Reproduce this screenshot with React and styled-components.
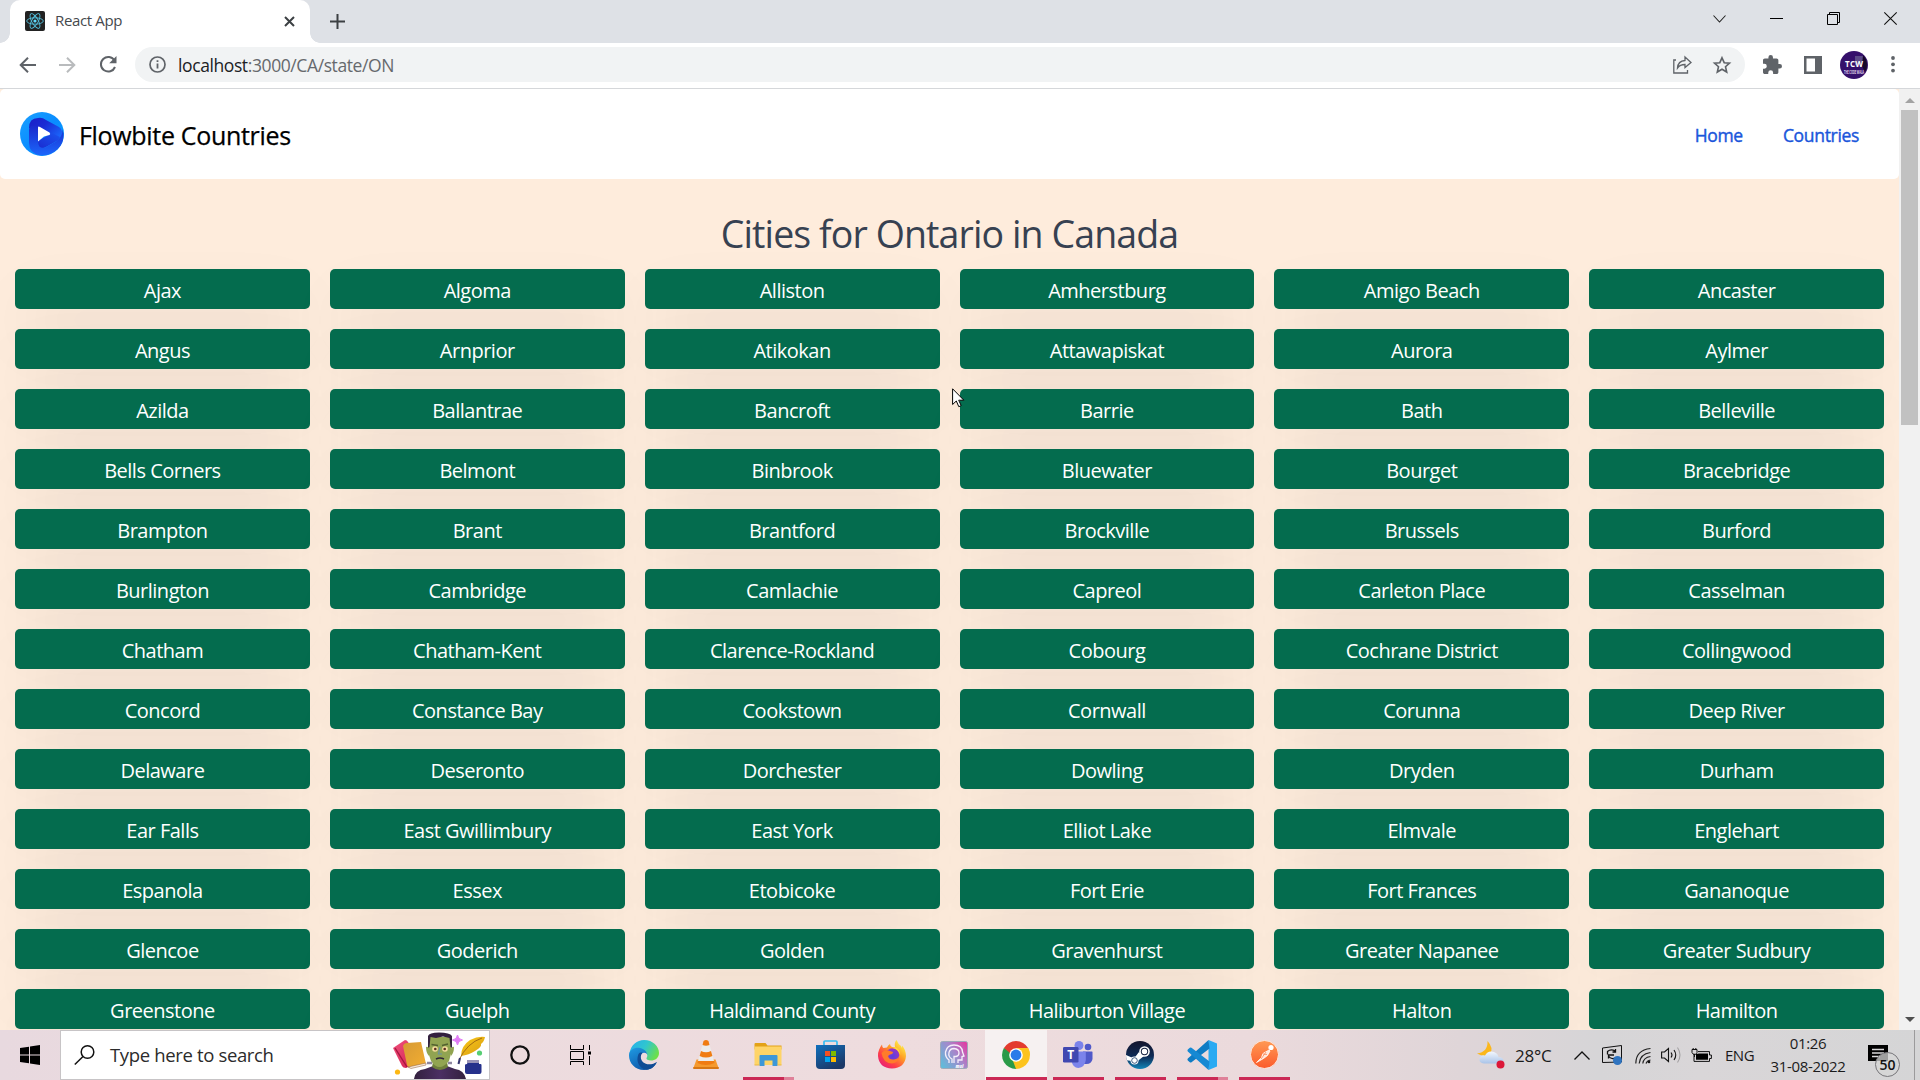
import React from "react";
import styled, { createGlobalStyle } from "styled-components";

const GlobalStyle = createGlobalStyle`
  *, *::before, *::after { box-sizing: border-box; }
  html, body { margin: 0; padding: 0; overflow: hidden; }
  body { font-family: "Open Sans", "Noto Sans", sans-serif; }
  svg { display: block; flex: none; overflow: visible; }
`;

const Screen = styled.div`
  width: 1920px;
  height: 1080px;
  display: flex;
  flex-direction: column;
  overflow: hidden;
  background: #fff;
`;

/* ---------- browser chrome ---------- */

const TabStrip = styled.div`
  height: 43px;
  flex: none;
  background: #dee1e6;
  display: flex;
  padding-left: 10px;
`;

const Tab = styled.div`
  position: relative;
  width: 300px;
  height: 43px;
  background: #fff;
  border-radius: 10px 10px 0 0;
  display: flex;
  align-items: center;
  padding: 0 15px 1px 15px;
  &::before, &::after {
    content: "";
    position: absolute;
    bottom: 0;
    width: 10px;
    height: 10px;
  }
  &::before {
    left: -10px;
    background: radial-gradient(circle at 0 0, transparent 9.5px, #fff 10px);
  }
  &::after {
    right: -10px;
    background: radial-gradient(circle at 100% 0, transparent 9.5px, #fff 10px);
  }
`;

const TabTitle = styled.span`
  flex: 1;
  margin-left: 10px;
  padding-bottom: 2px;
  font-size: 15px;
  letter-spacing: -0.35px;
  line-height: 20px;
  color: #45494d;
`;

const NewTab = styled.div`
  display: flex;
  align-items: center;
  margin-left: 20px;
`;

const WindowControls = styled.div`
  margin-left: auto;
  display: flex;
  align-items: center;
  height: 37px;
  gap: 44px;
  padding-right: 22px;
`;

const Toolbar = styled.div`
  height: 46px;
  flex: none;
  display: flex;
  align-items: center;
  padding: 0 20px 2px 19px;
  border-bottom: 1px solid #d5d7da;
`;

const NavButtons = styled.div`
  display: flex;
  align-items: center;
  gap: 23px;
  width: 116px;
  flex: none;
`;

const AddressBar = styled.div`
  width: 1610px;
  height: 35px;
  flex: none;
  border-radius: 18px;
  background: #f1f3f4;
  display: flex;
  align-items: center;
  padding: 0 14px;
`;

const Url = styled.span`
  flex: 1;
  margin-left: 12px;
  font-size: 17.5px;
  letter-spacing: -0.4px;
  line-height: 24px;
  color: #66696d;
  b { font-weight: 400; color: #202124; }
`;

const AddressActions = styled.div`
  display: flex;
  align-items: center;
  gap: 21px;
`;

const Extensions = styled.div`
  flex: 1;
  display: flex;
  align-items: center;
  padding-left: 18px;
`;

const SidePanelButton = styled.div`
  margin: 0 18px 0 22px;
`;

const MenuButton = styled.div`
  margin-left: 23px;
`;

/* ---------- page ---------- */

const Viewport = styled.div`
  height: 941px;
  flex: none;
  display: flex;
  overflow: hidden;
`;

const Page = styled.main`
  width: 1899px;
  flex: none;
  overflow: hidden;
  background: #feecdc;
`;

const SiteHeader = styled.header`
  height: 90px;
  background: #fff;
  border-radius: 5px;
  display: flex;
  align-items: center;
  padding: 0 40px 0 20px;
`;

const Brand = styled.span`
  margin-left: 15px;
  padding-top: 2px;
  font-size: 25px;
  line-height: 34px;
  letter-spacing: -0.32px;
  -webkit-text-stroke: 0.25px #000;
  color: #000;
`;

const SiteNav = styled.nav`
  margin-left: auto;
  padding-top: 2px;
  display: flex;
  gap: 40px;
`;

const NavLink = styled.a`
  font-size: 17.5px;
  line-height: 25px;
  letter-spacing: -0.32px;
  -webkit-text-stroke: 0.4px #1a56db;
  color: #1a56db;
`;

const Title = styled.h1`
  margin: 30px 0 0;
  height: 50px;
  font-size: 37.5px;
  font-weight: 400;
  line-height: 50px;
  letter-spacing: -0.9px;
  text-align: center;
  color: #374151;
`;

const CityGrid = styled.div`
  display: grid;
  grid-template-columns: repeat(6, 1fr);
  grid-auto-rows: 40px;
  gap: 20px;
  padding: 10px 15px 0;
`;

const CityButton = styled.div`
  border-radius: 5px;
  background: #046c4e;
  box-shadow: 0 31px 62px -15px rgba(0, 0, 0, 0.25);
  color: #fff;
  font-size: 20px;
  line-height: 43px;
  letter-spacing: -0.5px;
  text-align: center;
`;

const ScrollTrack = styled.div`
  width: 21px;
  background: #f1f1f1;
  display: flex;
  flex-direction: column;
  align-items: center;
  justify-content: space-between;
`;

const ScrollTop = styled.div`
  display: flex;
  flex-direction: column;
  align-items: center;
`;

const ScrollThumb = styled.div`
  width: 17px;
  height: 315px;
  background: #c1c1c1;
`;

const ScrollArrow = styled.div`
  height: ${(p) => (p.$down ? 17 : 21)}px;
  padding-top: ${(p) => (p.$down ? 4 : 9)}px;
  &::after {
    content: "";
    display: block;
    border: 5px solid transparent;
    ${(p) =>
      p.$down
        ? "border-bottom-width: 0; border-top-color: #505050;"
        : "border-top-width: 0; border-bottom-color: #a3a3a3;"}
  }
`;

const Pointer = styled.svg`
  position: absolute;
  left: 952px;
  top: 388px;
`;

/* ---------- taskbar ---------- */

const Taskbar = styled.footer`
  height: 50px;
  flex: none;
  display: flex;
  background: linear-gradient(90deg, #e8d9df 0, #ecdbde 400px, #eedcde 900px, #ebdadc 1250px, #dfd5d8 1460px, #d6d5d7 1600px, #d9d6d8 1700px, #d5d5d6 1920px);
`;

const StartButton = styled.div`
  width: 60px;
  display: flex;
  align-items: center;
  justify-content: center;
`;

const SearchBox = styled.div`
  width: 430px;
  border: 1px solid #c7c4c6;
  background: #fff;
  display: flex;
  align-items: center;
  padding: 0 2px 0 13px;
`;

const SearchText = styled.span`
  flex: 1;
  margin-left: 15px;
  padding-bottom: 2px;
  font-size: 18.5px;
  letter-spacing: -0.35px;
  color: #2b2b2b;
`;

const Apps = styled.div`
  display: flex;
  margin-left: -1px;
`;

const AppSlot = styled.div`
  width: 62px;
  display: flex;
  flex-direction: column;
  align-items: center;
  justify-content: space-between;
  background: ${(p) => (p.$active ? "#f6f1f1" : "transparent")};
`;

const AppIcon = styled.div`
  height: 47px;
  padding-top: 2px;
  display: flex;
  align-items: center;
`;

const RunBar = styled.div`
  height: 3px;
  width: ${(p) => (p.$kind === "active" ? 61 : 51)}px;
  background: ${(p) =>
    p.$kind === "none"
      ? "transparent"
      : p.$kind === "multi"
      ? "linear-gradient(90deg, #cb2855 41px, #df8199 41px)"
      : "#cb2855"};
`;

const Tray = styled.div`
  margin-left: auto;
  display: flex;
  align-items: center;
`;

const TrayItem = styled.div`
  width: ${(p) => p.$w}px;
  display: flex;
  align-items: center;
  flex: none;
`;

const TrayText = styled.span`
  font-size: ${(p) => p.$size || 16}px;
  letter-spacing: ${(p) => p.$track || 0}px;
  color: #1b1b1b;
  white-space: nowrap;
`;

const Clock = styled.div`
  width: 84px;
  display: flex;
  flex-direction: column;
  align-items: center;
  font-size: 15px;
  line-height: 23px;
  letter-spacing: -0.35px;
  color: #1b1b1b;
  white-space: nowrap;
`;

const ActionCenter = styled.div`
  width: 64px;
  flex: none;
  padding: 10px 0 0 18px;
`;

const DesktopEdge = styled.div`
  width: 6px;
  height: 50px;
  border-left: 1px solid #9b9a9b;
`;

/* ---------- icons ---------- */

const ReactIcon = () => (
  <svg width="20" height="20" viewBox="0 0 20 20">
    <rect width="20" height="20" rx="2" fill="#222" />
    <g fill="none" stroke="#53c1de" strokeWidth="0.9">
      <ellipse cx="10" cy="10" rx="8.3" ry="3.2" />
      <ellipse cx="10" cy="10" rx="8.3" ry="3.2" transform="rotate(60 10 10)" />
      <ellipse cx="10" cy="10" rx="8.3" ry="3.2" transform="rotate(120 10 10)" />
    </g>
    <circle cx="10" cy="10" r="1.6" fill="#61dafb" />
  </svg>
);

const BrandLogo = () => (
  <svg width="44" height="44" viewBox="0 0 44 44">
    <defs>
      <linearGradient id="bl1" x1="0" y1="0" x2="1" y2="1">
        <stop offset="0" stopColor="#1ba0ff" />
        <stop offset=".5" stopColor="#0a8dff" />
        <stop offset="1" stopColor="#02a4ff" />
      </linearGradient>
      <linearGradient id="bl2" x1="0" y1="0" x2="0" y2="1">
        <stop offset="0" stopColor="#1a2acc" />
        <stop offset="1" stopColor="#1b66fb" />
      </linearGradient>
      <linearGradient id="bl3" x1="0" y1="0" x2="1" y2=".7">
        <stop offset="0" stopColor="#1a1fc6" />
        <stop offset=".45" stopColor="#1a2bd4" />
        <stop offset="1" stopColor="#1a66fa" />
      </linearGradient>
      <linearGradient id="bl4" x1="0" y1="1" x2="1" y2="0">
        <stop offset="0" stopColor="#1a2bd0" />
        <stop offset="1" stopColor="#1a55f0" />
      </linearGradient>
      <clipPath id="blc"><circle cx="22" cy="22" r="22" /></clipPath>
    </defs>
    <circle cx="22" cy="22" r="22" fill="url(#bl1)" />
    <g clipPath="url(#blc)">
      <path d="M9 16 Q9 6 18 6 Q22 5 26 8 L39 15 Q43.500 18 42 26 Q40 30 34 29 L20 18Z" fill="url(#bl3)" />
      <path d="M18 29 L32 21 L40 25 Q39 28 35 30 L25 35.500 Q18 38 18 31Z" fill="url(#bl4)" />
      <path d="M9 18 Q9 13.500 13.500 13.500 Q18 13.500 18 18 V30 Q18 37 25 35.500 L36 29.500 Q43 25 42.500 17 Q47 32 34 40 Q28 44 20 43.500 Q9 41 9 31Z" fill="url(#bl2)" />
    </g>
    <path d="M18 15.500 Q18 14 20 15 L29.500 20.500 Q31 22 29.500 23 L24 24.500 L18 29.500Z" fill="#fff" />
  </svg>
);

const Avatar = () => (
  <svg width="28" height="28" viewBox="0 0 28 28">
    <circle cx="14" cy="14" r="14" fill="#35106b" />
    <path d="M15 5h8l2 3v5l-10 1z" fill="#5c4a88" />
    <path d="M23 4a14 14 0 0 1 2 17l-3-6z" fill="#150628" />
    <text x="14" y="15.500" textAnchor="middle" fontSize="8" fontWeight="700" fill="#fff" fontFamily="Open Sans" textLength="18">TCW</text>
    <text x="14" y="22.500" textAnchor="middle" fontSize="4.500" fontWeight="700" fill="#e4dcf0" fontFamily="Open Sans" textLength="20" lengthAdjust="spacingAndGlyphs">THE CODE WALA</text>
  </svg>
);

const Line = ({ w, h, d, c = "#3c4043", s = 1, fill = "none" }) => (
  <svg width={w} height={h} viewBox={`0 0 ${w} ${h}`}>
    <path d={d} fill={fill} stroke={c} strokeWidth={s} />
  </svg>
);

const SearchArt = () => (
  <svg width="94" height="46" viewBox="0 0 94 46">
    <defs>
      <linearGradient id="sa1" x1="0" y1="0" x2="1" y2="1"><stop offset="0" stopColor="#f0527d" /><stop offset="1" stopColor="#d01c4c" /></linearGradient>
      <linearGradient id="sa2" x1="0" y1="0" x2="1" y2="1"><stop offset="0" stopColor="#d69a35" /><stop offset="1" stopColor="#f4ae31" /></linearGradient>
      <linearGradient id="sa3" x1="0" y1="0" x2="1" y2="1"><stop offset="0" stopColor="#f9c818" /><stop offset="1" stopColor="#d99d12" /></linearGradient>
      <linearGradient id="sa4" x1="0" y1="0" x2="1" y2="0"><stop offset="0" stopColor="#33213e" /><stop offset=".5" stopColor="#4b2f63" /><stop offset="1" stopColor="#33213e" /></linearGradient>
    </defs>
    <path d="M0 16 L12 8 Q14 8 15 10 L27 29 L13 36 Q10 36 9 34Z" fill="url(#sa1)" />
    <path d="M2 16 L14 35" stroke="#a71640" strokeWidth="1.4" />
    <path d="M10 14 Q11 11 14 11 L28 10 L33 32 L18 36 Q15 36 14 33Z" fill="url(#sa2)" />
    <path d="M15 35 L33 31 L33 33 L18 36.500Z" fill="#f8eadb" stroke="#8a5b3c" strokeWidth=".5" />
    <circle cx="4.500" cy="40" r="2.600" fill="#fdb813" />
    <path d="M21 47 Q22 38 32 37 L40 34 H54 L62 37 Q71 38 73 47Z" fill="url(#sa4)" />
    <path d="M40 30 H54 L55 35 Q47 41 39 35Z" fill="#6e7f3b" />
    <path d="M35 14 L36 5 H57 L58.500 14 V20 L56 29 Q51 35 46.500 35 Q42 35 38 29 L35 20Z" fill="#91a451" />
    <path d="M35 16 V4 Q36 .5 46 .5 Q57 .5 59 4 V16 L57.500 15 L56.500 6 L50 4.500 L43 6 L37.500 5 L36.500 15Z" fill="#33213e" />
    <path d="M33 15 q2-1 3 2 v7 q-3-3-3-9M61 15 q-2-1-3 2 v7 q3-3 3-9" fill="#91a451" />
    <path d="M38.500 12.500 L45 13.500 M49 13.500 L55 12" stroke="#52612f" strokeWidth="1.300" />
    <circle cx="42" cy="17" r="2.800" fill="#f4db9b" /><circle cx="52" cy="17" r="2.800" fill="#f4db9b" />
    <circle cx="42.300" cy="17" r="1.300" fill="#5a2f20" /><circle cx="51.700" cy="17" r="1.300" fill="#5a2f20" />
    <path d="M47 15 L45.500 22 H49" fill="none" stroke="#6b8fa0" strokeWidth="1.200" />
    <path d="M43 27 Q47 25 51 27" fill="none" stroke="#2f2537" strokeWidth="1.500" />
    <path d="M34 31 h5 M55 31 h4" stroke="#8d86a0" strokeWidth="2.500" />
    <path d="M64.500 3 Q65 7.500 69.500 8 Q65 8.500 64.500 13 Q64 8.500 59.500 8 Q64 7.500 64.500 3Z" fill="#e07bf5" stroke="#e07bf5" />
    <path d="M68 24 Q68 14 77 8 Q85 4 92 5 Q91 10 88 12 Q89 15 82 19 Q76 23 68 24Z" fill="url(#sa3)" />
    <path d="M89 6 Q74 11 66 28" fill="none" stroke="#a36d12" strokeWidth="1" />
    <path d="M67 26 L65.500 32" stroke="#35366f" strokeWidth="2" />
    <circle cx="86.500" cy="21" r="2.600" fill="#57ce73" />
    <path d="M75 29 h11 v3 h1.500 q1 0 1 1 v7 q0 2-2 2 H74 q-2 0-2-2 v-7 q0-1 2-1Z" fill="#26318b" />
    <path d="M74 28 h12 v3 h-12Z" fill="#9892b5" />
  </svg>
);

const Cortana = () => (
  <svg width="20" height="20" viewBox="0 0 20 20"><circle cx="10" cy="10" r="8.700" fill="none" stroke="#111" strokeWidth="2.300" /></svg>
);

const TaskView = () => (
  <svg width="22" height="20" viewBox="1 0 22 20" fill="none" stroke="#000" strokeWidth="1">
    <path d="M.5 0V4.500H13.500V0M.5 6.500H13.500V14.500H.5ZM.5 20V16.500H13.500V20M19.500 0V5M19.500 11V20" />
    <path d="M18 6.500h3v3h-3z" fill="#000" stroke="none" />
  </svg>
);

const Edge = () => (
  <svg width="30" height="30" viewBox="0 0 30 30">
    <defs>
      <linearGradient id="ed1" x1="0" y1=".2" x2="1" y2=".6"><stop offset="0" stopColor="#26b0ea" /><stop offset=".5" stopColor="#30c6cf" /><stop offset="1" stopColor="#6ee047" /></linearGradient>
      <linearGradient id="ed2" x1="0" y1="0" x2=".6" y2="1"><stop offset="0" stopColor="#1f9be3" /><stop offset="1" stopColor="#0e56a8" /></linearGradient>
    </defs>
    <path d="M.5 13 C2 5 8 0 15 0 C24 0 30 6.500 30 13 C30 18 26 20.500 22 20.500 C19 20.500 17 19.500 17.500 18 C19.500 15.500 18 11 13 10 C7 9 1 11 .5 17Z" fill="url(#ed1)" />
    <path d="M0 15.500 C0 10 5 7.500 9.500 7.700 C14 8 18 11 18.500 15 C17 11.500 11.500 12 11.300 17 C11 22 16 26 22 25 C24 24.500 26 23.500 27.800 22 C26 27 21 30 15 30 C6 30 0 23 0 15.500Z" fill="url(#ed2)" />
    <path d="M9.500 14 C6.500 21 10 28.500 17.500 29.800 C22 29.500 26 26.500 27.800 22 C23 25.500 16 25 13 21 C11 18 11.500 15 13.500 12.700 Q11 12 9.500 14Z" fill="#104b94" />
  </svg>
);

const Vlc = () => (
  <svg width="26" height="29" viewBox="0 0 26 29">
    <path d="M3.500 19.500h19l3.200 8.800H.3z" fill="#f59a2e" />
    <path d="M.3 27h25.400v2H.3z" fill="#d87713" />
    <path d="M10.500 1q2.500-2 5 0L21 21q-8 5-16 0z" fill="#ececec" />
    <path d="M10.500 1q2.500-2 5 0l1 4q-3.500 1.500-7 0zM8 11q5 2.500 10 0l1.400 5q-6.400 3-12.800 0zM5 21h16l.5 2q-8.500 4-17 0z" fill="#f07c12" />
  </svg>
);

const Folder = () => (
  <svg width="28" height="24" viewBox="0 0 28 24">
    <path d="M.5 1q0-1 1-1h10l2 2.500h14v4H.5z" fill="#e3a217" />
    <path d="M.5 3.500h26q1 0 1 1V22H.5z" fill="#fed467" />
    <path d="M5.500 13q0-1 1-1h16q1 0 1 1v10h-5v-5.500h-8V23h-5z" fill="#3d97d8" />
    <path d="M.5 21.500h5v1H.5zM23.500 21.500h4v1h-4z" fill="#e9b642" />
  </svg>
);

const Store = () => (
  <svg width="29" height="29" viewBox="0 0 29 29">
    <defs><linearGradient id="st1" x1="0" y1="0" x2=".6" y2="1"><stop offset="0" stopColor="#0f70bd" /><stop offset="1" stopColor="#1c3867" /></linearGradient></defs>
    <path d="M8 5.500V2q0-1 1-1h11q1 0 1 1v3.500" fill="none" stroke="#35bcf3" strokeWidth="1.700" />
    <path d="M0 5h29v20q0 4-4 4H4q-4 0-4-4z" fill="url(#st1)" />
    <path d="M9 11h5v5H9z" fill="#f25022" /><path d="M15 11h5v5h-5z" fill="#7fba00" /><path d="M9 17h5v5H9z" fill="#00a4ef" /><path d="M15 17h5v5h-5z" fill="#ffb900" />
  </svg>
);

const Firefox = () => (
  <svg width="28" height="29" viewBox="0 0 28 29">
    <defs>
      <linearGradient id="ff1" x1=".85" y1=".1" x2=".15" y2=".95"><stop offset="0" stopColor="#fff04a" /><stop offset=".35" stopColor="#ff9f25" /><stop offset=".7" stopColor="#ff4047" /><stop offset="1" stopColor="#e61d78" /></linearGradient>
      <radialGradient id="ff2" cx=".5" cy=".6" r=".6"><stop offset="0" stopColor="#5b3fe0" /><stop offset="1" stopColor="#9b35c4" /></radialGradient>
    </defs>
    <path d="M1 10 Q2 7 4 4.500 Q4 7 5.500 8 L9 7.500 Q10 5 12 4 Q12 6 14 7 L17 7 Q16 3 18.500 0 Q20 4 23 6 L24 8 V5.500 Q28 10 28 16 Q27 28 14 28.500 Q1 28 0 16 Q0 12 1 10Z" fill="url(#ff1)" />
    <circle cx="14.500" cy="15" r="6.800" fill="url(#ff2)" />
    <path d="M3.500 13 Q7 9 12 11 L15 12 Q15 14 12 14.500 L10 16 Q11 20 16 19.500 Q20 19 21 16 Q21 23 14 23.500 Q5 23 3.500 13Z" fill="#ff7b2a" />
    <path d="M17 7 Q22 9 22.500 15 Q19 8 14 8Z" fill="#ffd83b" />
  </svg>
);

const Msi = () => (
  <svg width="28" height="28" viewBox="0 0 28 28">
    <defs><linearGradient id="ms1" x1="0" y1=".8" x2="1" y2=".1"><stop offset="0" stopColor="#62bad9" /><stop offset=".55" stopColor="#a687cb" /><stop offset="1" stopColor="#e33aa2" /></linearGradient></defs>
    <rect x=".5" y=".5" width="27" height="27" rx="2" fill="url(#ms1)" stroke="#9faab9" />
    <g fill="none" stroke="#f6eefa" strokeWidth="1.300">
      <path d="M9 22v-3Q5 16 5.500 11Q7 4 14 4Q22 4 22.500 11l1.500 4-2 .5V19h-4v3" />
      <path d="M12 22v-4Q8 16 9 11.500Q10 7.500 14 7.500Q19 8 19 12Q19 15 16 15.500h-2V22" />
    </g>
    <text x="15.500" y="26.500" fontSize="4.500" fontWeight="800" fontStyle="italic" fill="#fff" fontFamily="Open Sans">msi</text>
  </svg>
);

const Chrome = () => (
  <svg width="28" height="28" viewBox="0 0 28 28">
    <path d="M14 14 L1.900 7 A14 14 0 0 1 26.100 7Z" fill="#e33b2e" />
    <path d="M14 14 L26.100 7 A14 14 0 0 1 14 28Z" fill="#fcc31e" />
    <path d="M14 14 L14 28 A14 14 0 0 1 1.900 7Z" fill="#2a9a48" />
    <path d="M14 7h12.100Q28 11 28 14H18z" fill="#fcc31e" /><path d="M1.900 7L8 17.500 14 14z" fill="#2a9a48" /><path d="M2 7h24.100H14L8 12z" fill="#e33b2e" /><path d="M20 17.500L14 28 11 20z" fill="#fcc31e" />
    <circle cx="14" cy="14" r="6.800" fill="#fff" /><circle cx="14" cy="14" r="5.400" fill="#2b7be9" />
  </svg>
);

const Teams = () => (
  <svg width="30" height="27" viewBox="0 0 30 27">
    <circle cx="25" cy="6" r="3.300" fill="#5059c9" />
    <path d="M20 10.500h9q.5 0 .5 1V18q-1 5-6 5h-3.500z" fill="#5059c9" />
    <circle cx="16" cy="4.500" r="4.500" fill="#7b83eb" />
    <path d="M9 10.500h13q.8 0 .8 1V19q-1 7.500-7.500 8Q10 27 8.500 20z" fill="#7b83eb" />
    <rect y="6" width="15.500" height="15.500" rx="1.300" fill="#4048b1" />
    <text x="7.700" y="18" textAnchor="middle" fontSize="12" fontWeight="700" fill="#fff" fontFamily="Open Sans">T</text>
  </svg>
);

const Steam = () => (
  <svg width="28" height="28" viewBox="0 0 28 28">
    <defs>
      <linearGradient id="sm1" x1="0" y1="0" x2="0" y2="1"><stop offset="0" stopColor="#14152c" /><stop offset=".55" stopColor="#0e2a55" /><stop offset="1" stopColor="#1386b8" /></linearGradient>
      <clipPath id="smc"><circle cx="14" cy="14" r="14" /></clipPath>
    </defs>
    <circle cx="14" cy="14" r="14" fill="url(#sm1)" />
    <g clipPath="url(#smc)">
      <path d="M-1 13.500L8 17.500 13 11 18 15 11 20.500 -1 19z" fill="#fff" />
      <circle cx="18.500" cy="10.500" r="5.300" fill="#fff" /><circle cx="18.500" cy="10.500" r="3.700" fill="#14203f" /><circle cx="18.500" cy="10.500" r="2.700" fill="#fff" />
      <circle cx="8.500" cy="19.500" r="4" fill="#fff" /><circle cx="8.500" cy="19.500" r="2.800" fill="none" stroke="#143762" strokeWidth=".8" />
    </g>
  </svg>
);

const VsCode = () => (
  <svg width="30" height="30" viewBox="0 0 30 30">
    <path d="M21.500 0L30 3.500V26.500L21.500 30Z" fill="#2aaaf2" />
    <path d="M21.500 0L.8 18.500Q0 19.500.8 20.500l2 1.700q1 .6 1.700 0L22.500 8.500z" fill="#0f7cc4" />
    <path d="M21.500 30L.8 11.500Q0 10.500.8 9.500l2-1.700q1-.6 1.700 0L22.500 21.500z" fill="#1689d3" />
  </svg>
);

const Postman = () => (
  <svg width="29" height="29" viewBox="0 0 29 29">
    <defs><linearGradient id="pm1" x1="0" y1="0" x2="0" y2="1"><stop offset="0" stopColor="#ff9a54" /><stop offset="1" stopColor="#fb5a2c" /></linearGradient></defs>
    <circle cx="14.500" cy="14.500" r="14" fill="url(#pm1)" stroke="#fbe9e3" strokeWidth="1" />
    <circle cx="21" cy="7.500" r="2.600" fill="#fff" />
    <path d="M19 10L13 13.500 11.500 17.500 6.500 22.500 13.500 18.500 17.500 15.500 20 11z" fill="#ffe9dd" stroke="#fff" strokeWidth=".8" />
    <path d="M13 14L17 14.500M16 12L11 19" stroke="#fb7a45" strokeWidth=".7" />
  </svg>
);

const Weather = () => (
  <svg width="28" height="28" viewBox="0 0 28 28">
    <defs><linearGradient id="we1" x1="0" y1="0" x2="0" y2="1"><stop offset="0" stopColor="#f3f7fd" /><stop offset="1" stopColor="#a9c3e8" /></linearGradient></defs>
    <path d="M10.500 0Q17 7 13 13 8 17 0 12.500 11 11 10.500 0Z" fill="#fbb71c" />
    <path d="M7 22.500Q2 22 2.500 17.500 4 13.500 8 14.500 11 9 17 11 21 12.500 21.500 16 26 16 26.500 19.500 26 23 22 22.500Z" fill="url(#we1)" />
    <circle cx="23.500" cy="23.500" r="4" fill="#dc1738" />
  </svg>
);

const UpdateIcon = () => (
  <svg width="20" height="20" viewBox="0 0 20 20">
    <path d="M.5 3L19.500.5V17L.5 17.500Z" fill="none" stroke="#111" strokeWidth="1" />
    <path d="M5.500 9.500V6.500Q9 3.500 13 6M13.500 4v3h-3M12 10H6.500v3.500M6.500 11Q9 15 13 13" fill="none" stroke="#111" strokeWidth="1.300" />
    <circle cx="15.500" cy="15.500" r="4.500" fill="#2f74c0" />
  </svg>
);

const Wifi = () => (
  <svg width="16" height="17" viewBox="0 0 16 17" fill="none" stroke="#222" strokeWidth="1.200">
    <path d="M.8 16.500Q1 3 15.500 1.500M4.200 16.500Q5 7 15.500 5.500M7.800 16.500Q8.500 10.500 15.500 9.500M11 16.500Q12 13.500 15.500 13" />
    <circle cx="14" cy="15" r="1.300" fill="#111" stroke="none" />
  </svg>
);

const Speaker = () => (
  <svg width="21" height="18" viewBox="0 0 21 18" fill="none" stroke="#111" strokeWidth="1.100">
    <path d="M.6 6H3.500L7.500 2.500V15.500L3.500 12H.6Z" />
    <path d="M10 6.500Q12 9 10 11.500M13 4Q16.500 9 13 14" />
    <path d="M16.500 1.500Q21.500 9 16.500 16.500" stroke="#a3a1a3" />
  </svg>
);

const Battery = () => (
  <svg width="20" height="14" viewBox="0 0 20 14">
    <path d="M2 5.500V13.400H17.500V10.500H19.400V7H17.500V3.600H6" fill="none" stroke="#111" />
    <path d="M4 6L7 5.500H16V11.800H4Z" fill="#000" />
    <path d="M0 1.500h5v3l-1.500 2h-2L0 4.500zM1.200 0v2M3.800 0v2M2.500 6v3" fill="none" stroke="#111" />
  </svg>
);

const Notifications = () => (
  <svg width="33" height="32" viewBox="0 0 33 32">
    <path d="M0 1h20v16H8l-3.500 0H0z" fill="#000" />
    <path d="M4 5.500h12M4 9h12M4 12.500h8" stroke="#d9d8d9" strokeWidth="1.300" />
    <circle cx="19.500" cy="20.500" r="12" fill="#d6d5d6" fillOpacity=".75" stroke="#77767a" strokeWidth="1" />
    <text x="19.500" y="25.500" textAnchor="middle" fontSize="14" fontWeight="600" fill="#111" fontFamily="Open Sans">50</text>
  </svg>
);

const TASKBAR_APPS = [
  ["cortana", Cortana, "none"],
  ["taskview", TaskView, "none"],
  ["edge", Edge, "none"],
  ["vlc", Vlc, "none"],
  ["files", Folder, "multi"],
  ["store", Store, "none"],
  ["firefox", Firefox, "none"],
  ["msi", Msi, "none"],
  ["chrome", Chrome, "active"],
  ["teams", Teams, "open"],
  ["steam", Steam, "open"],
  ["code", VsCode, "multi"],
  ["postman", Postman, "open"],
];

const CITIES = [
  "Ajax", "Algoma", "Alliston", "Amherstburg", "Amigo Beach", "Ancaster",
  "Angus", "Arnprior", "Atikokan", "Attawapiskat", "Aurora", "Aylmer",
  "Azilda", "Ballantrae", "Bancroft", "Barrie", "Bath", "Belleville",
  "Bells Corners", "Belmont", "Binbrook", "Bluewater", "Bourget", "Bracebridge",
  "Brampton", "Brant", "Brantford", "Brockville", "Brussels", "Burford",
  "Burlington", "Cambridge", "Camlachie", "Capreol", "Carleton Place", "Casselman",
  "Chatham", "Chatham-Kent", "Clarence-Rockland", "Cobourg", "Cochrane District", "Collingwood",
  "Concord", "Constance Bay", "Cookstown", "Cornwall", "Corunna", "Deep River",
  "Delaware", "Deseronto", "Dorchester", "Dowling", "Dryden", "Durham",
  "Ear Falls", "East Gwillimbury", "East York", "Elliot Lake", "Elmvale", "Englehart",
  "Espanola", "Essex", "Etobicoke", "Fort Erie", "Fort Frances", "Gananoque",
  "Glencoe", "Goderich", "Golden", "Gravenhurst", "Greater Napanee", "Greater Sudbury",
  "Greenstone", "Guelph", "Haldimand County", "Haliburton Village", "Halton", "Hamilton",
];

export default function App() {
  return (
    <Screen>
      <GlobalStyle />
      <TabStrip>
        <Tab>
          <ReactIcon />
          <TabTitle>React App</TabTitle>
          <Line w={11} h={11} d="M1 1L10 10M10 1L1 10" s={2} />
        </Tab>
        <NewTab>
          <Line w={15} h={15} d="M7.500 0V15M0 7.500H15" s={2} />
        </NewTab>
        <WindowControls>
          <Line w={13} h={8} d="M.5 .5L6.500 7L12.500 .5" c="#222" s={1.1} />
          <Line w={13} h={1} d="M0 .5H13" c="#000" />
          <Line w={13} h={13} d="M.5 2.500H10.500V12.500H.5ZM2.500 2.500V.5H12.500V10.500H10.500" c="#000" />
          <Line w={14} h={13} d="M.3 .3L12.700 12.700M12.700 .3L.3 12.700" c="#111" s={1.1} />
        </WindowControls>
      </TabStrip>

      <Toolbar>
        <NavButtons>
          <Line w={17} h={16} d="M17 8H2M9 .8L1.700 8L9 15.200" c="#5f6368" s={2} />
          <Line w={17} h={16} d="M0 8H15M8 .8L15.300 8L8 15.200" c="#b9bbbd" s={2} />
          <svg width="19" height="17" viewBox="0 0 19 17">
            <path d="M15.500 4.500A7.300 7.300 0 1 0 16 11" fill="none" stroke="#5f6368" strokeWidth="2" />
            <path d="M17.500 0V7.300H10.200Z" fill="#5f6368" />
          </svg>
        </NavButtons>
        <AddressBar>
          <svg width="17" height="17" viewBox="0 0 17 17">
            <circle cx="8.500" cy="8.500" r="7.500" fill="none" stroke="#5f6368" strokeWidth="1.700" />
            <path d="M8.500 7.500V12.500M8.500 4.300V6.100" stroke="#5f6368" strokeWidth="1.800" />
          </svg>
          <Url><b>localhost</b>:3000/CA/state/ON</Url>
          <AddressActions>
            <svg width="19" height="18" viewBox="0 0 19 18" fill="none" stroke="#5f6368" strokeWidth="1.300">
              <path d="M3 4H.8V17H14.500V14" />
              <path d="M4.500 12Q5 5 12 4.500V1L18 6.500 12 11.500V8.500Q7 8.500 4.500 12Z" />
            </svg>
            <svg width="18" height="18" viewBox="0 0 18 18" fill="none" stroke="#5f6368" strokeWidth="1.600">
              <path d="M9 1.800L11.200 6.700 16.500 7.200 12.500 10.700 13.700 16 9 13.200 4.300 16 5.500 10.700 1.500 7.200 6.800 6.700Z" />
            </svg>
          </AddressActions>
        </AddressBar>
        <Extensions>
          <svg width="19" height="19" viewBox="2 1 21 21">
            <path d="M20.500 11H19V7c0-1.100-.9-2-2-2h-4V3.500a2.500 2.500 0 0 0-5 0V5H4c-1.100 0-2 .9-2 2v3.800h1.500a2.700 2.700 0 0 1 0 5.400H2V20c0 1.100.9 2 2 2h3.800v-1.500a2.700 2.700 0 0 1 5.400 0V22H17c1.100 0 2-.9 2-2v-4h1.500a2.500 2.500 0 0 0 0-5z" fill="#5f6368" />
          </svg>
          <SidePanelButton>
            <svg width="18" height="18" viewBox="0 0 18 18">
              <path d="M0 0H18V18H0ZM2.500 2.500V15.500H11V2.500Z" fill="#5f6368" fillRule="evenodd" />
            </svg>
          </SidePanelButton>
          <Avatar />
          <MenuButton>
            <svg width="4" height="17" viewBox="0 0 4 17" fill="#5f6368">
              <circle cx="2" cy="2" r="1.900" /><circle cx="2" cy="8.300" r="1.900" /><circle cx="2" cy="14.600" r="1.900" />
            </svg>
          </MenuButton>
        </Extensions>
      </Toolbar>

      <Viewport>
        <Page>
          <SiteHeader>
            <BrandLogo />
            <Brand>Flowbite Countries</Brand>
            <SiteNav>
              <NavLink>Home</NavLink>
              <NavLink>Countries</NavLink>
            </SiteNav>
          </SiteHeader>
          <Title>Cities for Ontario in Canada</Title>
          <CityGrid>
            {CITIES.map((city) => (
              <CityButton key={city}>{city}</CityButton>
            ))}
          </CityGrid>
        </Page>
        <ScrollTrack>
          <ScrollTop>
            <ScrollArrow />
            <ScrollThumb />
          </ScrollTop>
          <ScrollArrow $down />
        </ScrollTrack>
      </Viewport>

      <Taskbar>
        <StartButton>
          <svg width="20" height="20" viewBox="0 0 20 20" fill="#000">
            <path d="M0 3L9 1.700V9.500H0ZM10 1.500L20 0V9.500H10ZM0 10.500H9V18.300L0 17ZM10 10.500H20V20L10 18.500Z" />
          </svg>
        </StartButton>
        <SearchBox>
          <svg width="21" height="20" viewBox="0 0 21 20" fill="none" stroke="#111" strokeWidth="1.500">
            <circle cx="13.500" cy="7" r="6.300" /><path d="M9 11.500L.8 19.500" />
          </svg>
          <SearchText>Type here to search</SearchText>
          <SearchArt />
        </SearchBox>
        <Apps>
          {TASKBAR_APPS.map(([name, Icon, state]) => (
            <AppSlot key={name} $active={state === "active"}>
              <AppIcon><Icon /></AppIcon>
              <RunBar $kind={state} />
            </AppSlot>
          ))}
        </Apps>
        <Tray>
          <TrayItem $w={38}><Weather /></TrayItem>
          <TrayItem $w={59}><TrayText $size={17} $track={-0.2}>28°C</TrayText></TrayItem>
          <TrayItem $w={28}><Line w={16} h={9} d="M.5 8.500L8 1L15.500 8.500" c="#111" s={1.3} /></TrayItem>
          <TrayItem $w={33}><UpdateIcon /></TrayItem>
          <TrayItem $w={26}><Wifi /></TrayItem>
          <TrayItem $w={31}><Speaker /></TrayItem>
          <TrayItem $w={33}><Battery /></TrayItem>
          <TrayItem $w={41}><TrayText $size={15} $track={-0.5}>ENG</TrayText></TrayItem>
          <Clock><span>01:26</span><span>31-08-2022</span></Clock>
          <ActionCenter><Notifications /></ActionCenter>
          <DesktopEdge />
        </Tray>
      </Taskbar>

      <Pointer width="13" height="20" viewBox="0 0 13 20">
        <path d="M.6 .8V16.500L4.300 13 6.800 18.700 9.200 17.600 6.700 12.200H11.800Z" fill="#fff" stroke="#000" strokeWidth="1" />
      </Pointer>
    </Screen>
  );
}
